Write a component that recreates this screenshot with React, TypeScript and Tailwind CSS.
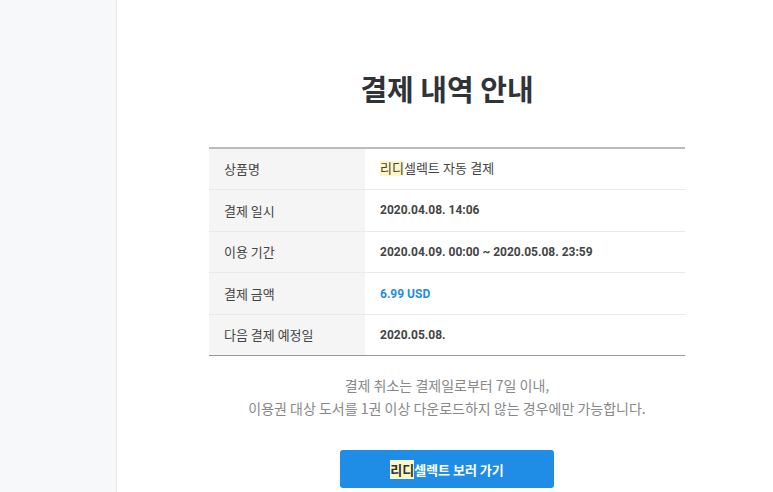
const rows: { label: string; value: React.ReactNode; blue?: boolean }[] = [
  {
    label: '상품명',
    value: (
      <span className="font-normal text-[13px]">
        <span className="bg-[#fdf7c3]">리디</span>셀렉트 자동 결제
      </span>
    ),
  },
  { label: '결제 일시', value: '2020.04.08. 14:06' },
  { label: '이용 기간', value: '2020.04.09. 00:00 ~ 2020.05.08. 23:59' },
  { label: '결제 금액', value: '6.99 USD', blue: true },
  { label: '다음 결제 예정일', value: '2020.05.08.' },
];

function App() {
  return (
    <div className="flex h-[492px] w-[773px] overflow-hidden bg-white font-['Noto_Sans_CJK_KR','Noto_Sans',sans-serif] text-[#333]">
      <aside className="w-[117px] shrink-0 border-r border-[#e6e8eb] bg-[#f7f8fa]" />
      <main className="flex flex-1 flex-col items-center pl-[4px]">
        <h1 className="mt-[64px] text-[29px] font-bold leading-[48px] text-[#303338]">결제 내역 안내</h1>
        <table className="mt-[35px] w-[476px] border-collapse border-t-2 border-b border-t-[#bbbbbb] border-b-[#999999] text-[13px]">
          <tbody>
            {rows.map((row, i) => (
              <tr key={row.label} className={i < rows.length - 1 ? 'border-b border-[#e9e9e9]' : ''}>
                <th className="h-[41.6px] w-[156px] bg-[#f5f5f5] pl-[15px] text-left font-normal text-[#444]">
                  {row.label}
                </th>
                <td
                  className={
                    "pl-[15px] font-['Roboto','Noto_Sans_CJK_KR',sans-serif] text-[12px] font-bold " +
                    (row.blue ? 'text-[#1f8ce6]' : 'text-[#444]')
                  }
                >
                  {row.value}
                </td>
              </tr>
            ))}
          </tbody>
        </table>
        <p className="mt-[18px] text-center text-[14px] leading-[23px] text-[#888]">
          결제 취소는 결제일로부터 7일 이내,
          <br />
          이용권 대상 도서를 1권 이상 다운로드하지 않는 경우에만 가능합니다.
        </p>
        <button className="mt-[30px] h-[38px] w-[214px] rounded-[3px] bg-[#1f8ce6] text-[13px] font-bold text-white">
          <span className="bg-[#fdf7c3] text-[#303338]">리디</span>셀렉트 보러 가기
        </button>
      </main>
    </div>
  );
}

export default App;
